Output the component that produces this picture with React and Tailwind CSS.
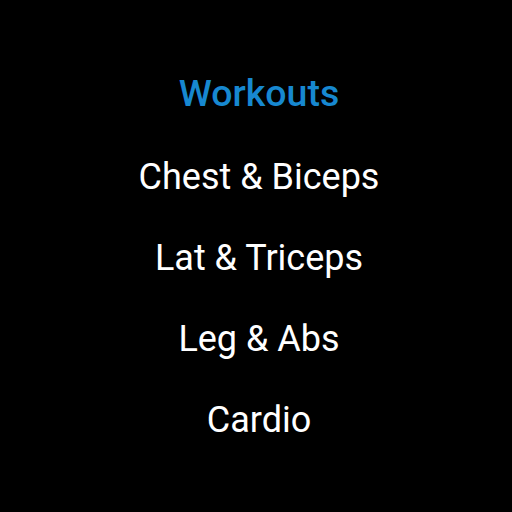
export default function App() {
  const items = ["Chest & Biceps", "Lat & Triceps", "Leg & Abs", "Cardio"];
  return (
    <div className="w-[512px] h-[512px] bg-black flex flex-col items-center pt-[70px] pl-[6px] font-['Roboto',sans-serif]">
      <div className="h-[46px] flex items-center text-[37.5px] font-medium text-[#1788d0]">Workouts</div>
      <div className="flex flex-col items-center mt-[38px] gap-[35px]">
        {items.map((t) => (
          <div key={t} className="h-[46px] flex items-center text-[36px] text-white">{t}</div>
        ))}
      </div>
    </div>
  );
}
